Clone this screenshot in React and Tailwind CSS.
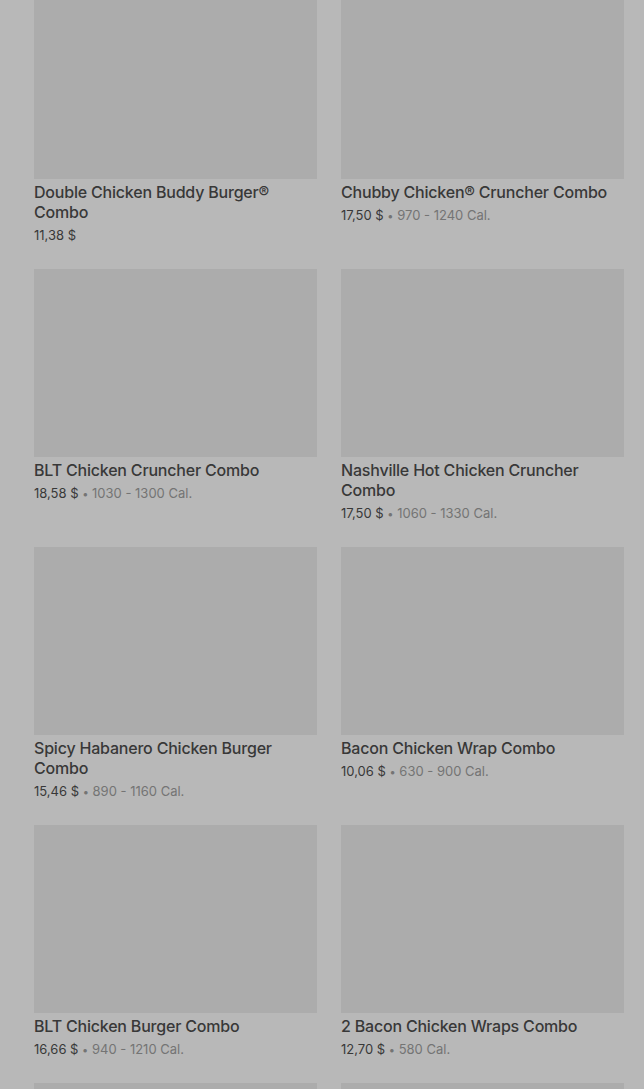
import React from "react";

const items = [
  { name: "Double Chicken Buddy Burger® Combo", price: "11,38 $" },
  { name: "Chubby Chicken® Cruncher Combo", price: "17,50 $", cal: "970 - 1240 Cal." },
  { name: "BLT Chicken Cruncher Combo", price: "18,58 $", cal: "1030 - 1300 Cal." },
  { name: "Nashville Hot Chicken Cruncher Combo", price: "17,50 $", cal: "1060 - 1330 Cal." },
  { name: "Spicy Habanero Chicken Burger Combo", price: "15,46 $", cal: "890 - 1160 Cal." },
  { name: "Bacon Chicken Wrap Combo", price: "10,06 $", cal: "630 - 900 Cal." },
  { name: "BLT Chicken Burger Combo", price: "16,66 $", cal: "940 - 1210 Cal." },
  { name: "2 Bacon Chicken Wraps Combo", price: "12,70 $", cal: "580 Cal." },
  { name: "Chicken Burger Combo", price: "12,10 $", cal: "700 - 970 Cal." },
  { name: "Chicken Wrap Combo", price: "9,50 $", cal: "500 - 770 Cal." },
];

function Card({ item }) {
  return (
    <div className="flex flex-col">
      <div className="h-[188px] w-full bg-[#acacac]" />
      <div className="mt-[3px] text-[16px] leading-5 font-medium text-[#383838] tracking-[-0.2px]">
        {item.name}
      </div>
      <div className="mt-[3px] h-5 text-[13px] leading-5 text-[#383838] whitespace-nowrap">
        <span>{item.price}</span>
        {item.cal && (
          <span className="text-[#747474]">
            {" "}
            <span className="text-[11px] leading-none">•</span> {item.cal}
          </span>
        )}
      </div>
    </div>
  );
}

export default function App() {
  return (
    <div
      className="w-full h-[1089px] overflow-hidden bg-[#b8b8b8]"
      style={{ fontFamily: "Inter, 'Noto Sans', sans-serif" }}
    >
      <div className="-mt-[9px] pl-[34px] pr-[20px] grid grid-cols-2 gap-x-[24px] gap-y-[24px]">
        {items.map((it, i) => (
          <Card key={i} item={it} />
        ))}
      </div>
    </div>
  );
}
